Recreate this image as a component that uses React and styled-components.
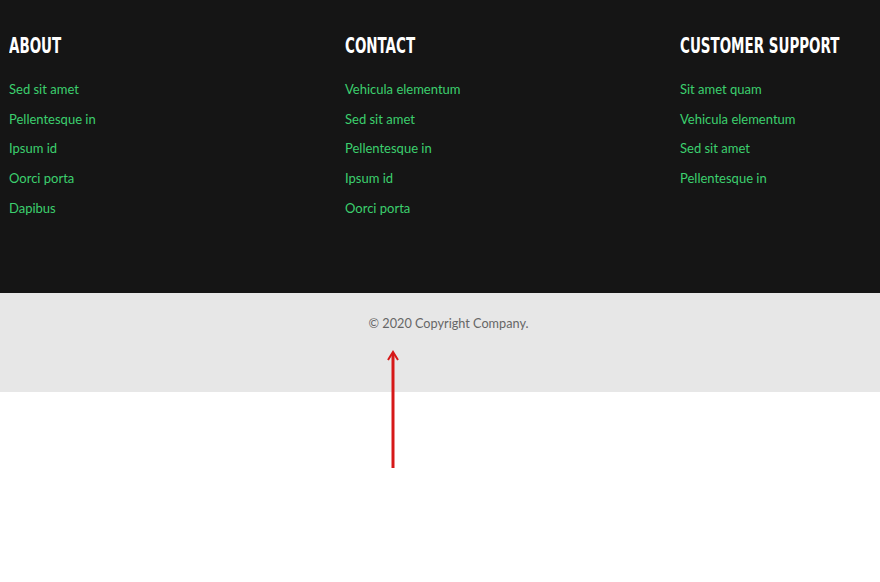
import styled, { createGlobalStyle } from "styled-components"

const Global = createGlobalStyle`
    body {
        margin: 0;
        background: #ffffff;
        font-family: Lato, "Open Sans", sans-serif;
    }
`

const Pagina = styled.div`
    position: relative;
    width: 880px;
    height: 582px;
`

const Rodape = styled.footer`
    background-color: #151515;
    height: 293px;
    box-sizing: border-box;
    padding: 33px 0 0 9px;
    display: grid;
    grid-template-columns: 336px 335px auto;
    align-items: start;
`

const Coluna = styled.div`
    display: flex;
    flex-direction: column;
`

const Titulo = styled.h4`
    margin: 0 0 16px;
    font-family: "DejaVu Sans", sans-serif;
    font-stretch: condensed;
    font-size: 22px;
    font-weight: 700;
    line-height: 26px;
    color: #ffffff;
    white-space: nowrap;
    transform: scaleX(0.68);
    transform-origin: left center;
`

const Lista = styled.ul`
    list-style: none;
    margin: 0;
    padding: 0;
    display: flex;
    flex-direction: column;
`

const Link = styled.li`
    font-size: 13px;
    line-height: 29.7px;
    color: #3ccf6e;
`

const Copyright = styled.div`
    background-color: #e7e7e7;
    height: 99px;
    box-sizing: border-box;
    padding: 21px 0 0 17px;
    text-align: center;
    font-size: 12.7px;
    line-height: 18px;
    color: #666666;
`

const Seta = styled.svg`
    position: absolute;
    left: 387px;
    top: 350px;
`

const colunas = [
    { titulo: "ABOUT", links: ["Sed sit amet", "Pellentesque in", "Ipsum id", "Oorci porta", "Dapibus"] },
    { titulo: "CONTACT", links: ["Vehicula elementum", "Sed sit amet", "Pellentesque in", "Ipsum id", "Oorci porta"] },
    { titulo: "CUSTOMER SUPPORT", links: ["Sit amet quam", "Vehicula elementum", "Sed sit amet", "Pellentesque in"] },
]

const App = () => {
    return (
        <Pagina>
            <Global />
            <Rodape>
                {colunas.map((c) => (
                    <Coluna key={c.titulo}>
                        <Titulo>{c.titulo}</Titulo>
                        <Lista>
                            {c.links.map((l) => (
                                <Link key={l}>{l}</Link>
                            ))}
                        </Lista>
                    </Coluna>
                ))}
            </Rodape>
            <Copyright>© 2020 Copyright Company.</Copyright>
            <Seta width="12" height="120" viewBox="0 0 12 120">
                <path d="M6 118 V4" stroke="#d61818" strokeWidth="3" fill="none" />
                <path d="M1 10 L6 2 L11 10" stroke="#d61818" strokeWidth="2" fill="none" />
            </Seta>
        </Pagina>
    )
}

export default App
